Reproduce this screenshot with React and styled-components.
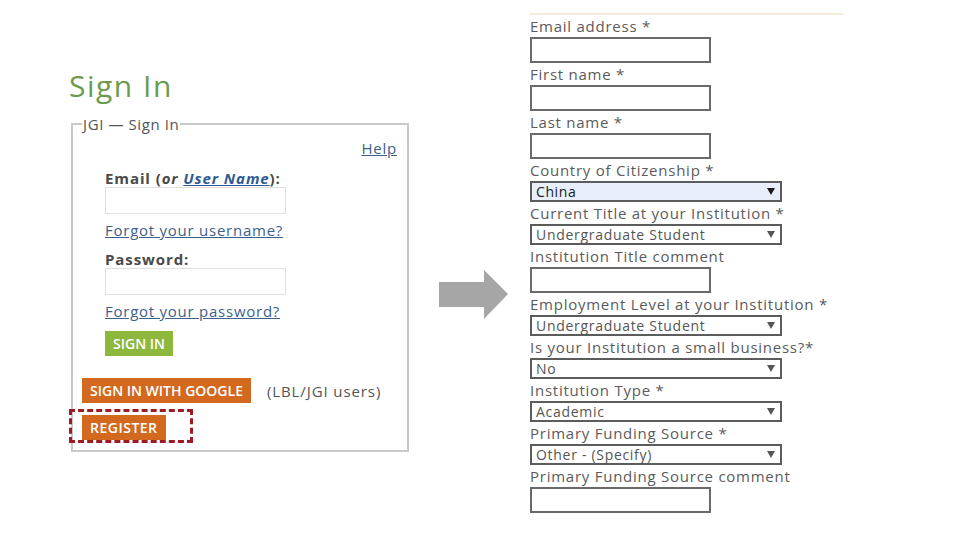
import styled, { createGlobalStyle } from "styled-components";

const GlobalStyle = createGlobalStyle`
  html, body {
    margin: 0;
    padding: 0;
    background: #ffffff;
    font-family: "Open Sans", "Liberation Sans", sans-serif;
  }
`;

const Page = styled.div`
  width: 960px;
  height: 540px;
  box-sizing: border-box;
  padding: 13px 0 0 69px;
  display: flex;
  align-items: flex-start;
  overflow: hidden;
`;

const LeftCol = styled.div`
  width: 341px;
  padding-top: 55px;
  display: flex;
  flex-direction: column;
`;

const Heading = styled.h1`
  margin: 0;
  font-size: 30px;
  line-height: 36px;
  font-weight: 400;
  letter-spacing: 1.5px;
  color: #6b9b4c;
`;

const Box = styled.fieldset`
  margin: 10px 0 0 2px;
  width: 338px;
  box-sizing: border-box;
  border: 2px solid #c9c9c9;
  padding: 4px 10px 10px 9px;
  display: flex;
  flex-direction: column;
  align-items: flex-start;
`;

const Legend = styled.legend`
  margin-left: 0;
  padding: 0 1px;
  font-size: 15px;
  line-height: 20px;
  letter-spacing: 0.6px;
  color: #555;
`;

const HelpRow = styled.div`
  align-self: stretch;
  text-align: right;
  line-height: 20px;
  font-size: 15px;
`;

const Link = styled.a`
  color: #3d5f8c;
  text-decoration: underline;
  font-size: 15px;
  line-height: 20px;
  letter-spacing: 0.75px;
  cursor: pointer;
`;

const FormBlock = styled.div`
  margin-left: 23px;
  display: flex;
  flex-direction: column;
  align-items: flex-start;
`;

const FieldLabel = styled.div`
  margin-top: ${(p) => p.$top}px;
  font-size: 15px;
  line-height: 18px;
  font-weight: 700;
  letter-spacing: 0.9px;
  color: #4a4a4a;

  em {
    font-style: italic;
  }
  a {
    color: #2f5a92;
    text-decoration: underline;
  }
`;

const LoginInput = styled.div`
  width: 181px;
  height: 27px;
  box-sizing: border-box;
  border: 1px solid #e0e0e0;
  background: #fff;
  margin-bottom: 6px;
`;

const Button = styled.button`
  margin-top: ${(p) => p.$top || 0}px;
  height: 25px;
  padding: 0 8px;
  border: none;
  background: ${(p) => (p.$green ? "#8db73d" : "#d2691f")};
  color: #fff;
  font-family: inherit;
  font-size: 14px;
  font-weight: 600;
  letter-spacing: ${(p) => p.$spacing || 0}px;
  text-transform: uppercase;
  line-height: 25px;
  cursor: pointer;
`;

const GoogleRow = styled.div`
  margin-top: 22px;
  display: flex;
  align-items: center;
  gap: 16px;
`;

const Note = styled.span`
  font-size: 15px;
  letter-spacing: 0.9px;
  color: #555;
`;

const Highlight = styled.div`
  position: relative;
  margin-top: 12px;

  &::after {
    content: "";
    position: absolute;
    left: -13px;
    top: -6px;
    width: 124px;
    height: 34px;
    box-sizing: border-box;
    border: 3px dashed #9b1d22;
    pointer-events: none;
  }
`;

const ArrowWrap = styled.div`
  margin: 257px 22px 0 29px;
  width: 69px;
  height: 49px;
  flex: none;
`;

const RightCol = styled.div`
  width: 313px;
  border-top: 2px solid #f6ead8;
  display: flex;
  flex-direction: column;
  align-items: flex-start;
`;

const Label = styled.div`
  font-size: 15px;
  line-height: 22px;
  height: 22px;
  letter-spacing: 0.75px;
  color: #5b5b5b;
  white-space: nowrap;
`;

const TextBox = styled.div`
  width: 181px;
  height: 26px;
  box-sizing: border-box;
  border: 2px solid #6a6a6a;
  background: #fff;
`;

const SelectBox = styled.div`
  width: 252px;
  height: 21px;
  box-sizing: border-box;
  border: 2px solid #5c5c5c;
  background: ${(p) => (p.$filled ? "#e8eefb" : "#fff")};
  color: ${(p) => (p.$filled ? "#1a1a1a" : "#555")};
  display: flex;
  align-items: center;
  justify-content: space-between;
  padding: 0 5px 0 4px;
  font-size: 14px;
  letter-spacing: ${(p) => (p.$filled ? "0.6px" : "0.7px")};
  line-height: 17px;

  svg {
    flex: none;
  }
`;

const Arrow = () => (
  <ArrowWrap>
    <svg width="69" height="49" viewBox="0 0 69 49">
      <polygon points="0,12 45,12 45,0 69,24 45,49 45,37 0,37" fill="#a6a6a6" />
    </svg>
  </ArrowWrap>
);

const Caret = () => (
  <svg width="8" height="7" viewBox="0 0 8 7">
    <polygon points="0,0 8,0 4,7" fill="currentColor" />
  </svg>
);

const Select = ({ value, filled }) => (
  <SelectBox $filled={filled}>
    <span>{value}</span>
    <Caret />
  </SelectBox>
);

const fields = [
  { label: "Email address *", type: "input" },
  { label: "First name *", type: "input" },
  { label: "Last name *", type: "input" },
  { label: "Country of Citizenship *", type: "select", value: "China", filled: true },
  { label: "Current Title at your Institution *", type: "select", value: "Undergraduate Student" },
  { label: "Institution Title comment", type: "input" },
  { label: "Employment Level at your Institution *", type: "select", value: "Undergraduate Student" },
  { label: "Is your Institution a small business?*", type: "select", value: "No" },
  { label: "Institution Type *", type: "select", value: "Academic" },
  { label: "Primary Funding Source *", type: "select", value: "Other - (Specify)" },
  { label: "Primary Funding Source comment", type: "input" },
];

export default function App() {
  return (
    <>
      <GlobalStyle />
      <Page>
        <LeftCol>
          <Heading>Sign In</Heading>
          <Box>
            <Legend>JGI — Sign In</Legend>
            <HelpRow>
              <Link>Help</Link>
            </HelpRow>
            <FormBlock>
              <FieldLabel $top={11}>
                Email (<em>or <a>User Name</a></em>):
              </FieldLabel>
              <LoginInput />
              <Link>Forgot your username?</Link>
              <FieldLabel $top={10}>Password:</FieldLabel>
              <LoginInput />
              <Link>Forgot your password?</Link>
              <Button $green $top={10}>Sign In</Button>
            </FormBlock>
            <GoogleRow>
              <Button>Sign In with Google</Button>
              <Note>(LBL/JGI users)</Note>
            </GoogleRow>
            <Highlight>
              <Button $spacing={0.5}>Register</Button>
            </Highlight>
          </Box>
        </LeftCol>
        <Arrow />
        <RightCol>
          {fields.map((f) => (
            <div key={f.label}>
              <Label>{f.label}</Label>
              {f.type === "input" ? (
                <TextBox />
              ) : (
                <Select value={f.value} filled={f.filled} />
              )}
            </div>
          ))}
        </RightCol>
      </Page>
    </>
  );
}
